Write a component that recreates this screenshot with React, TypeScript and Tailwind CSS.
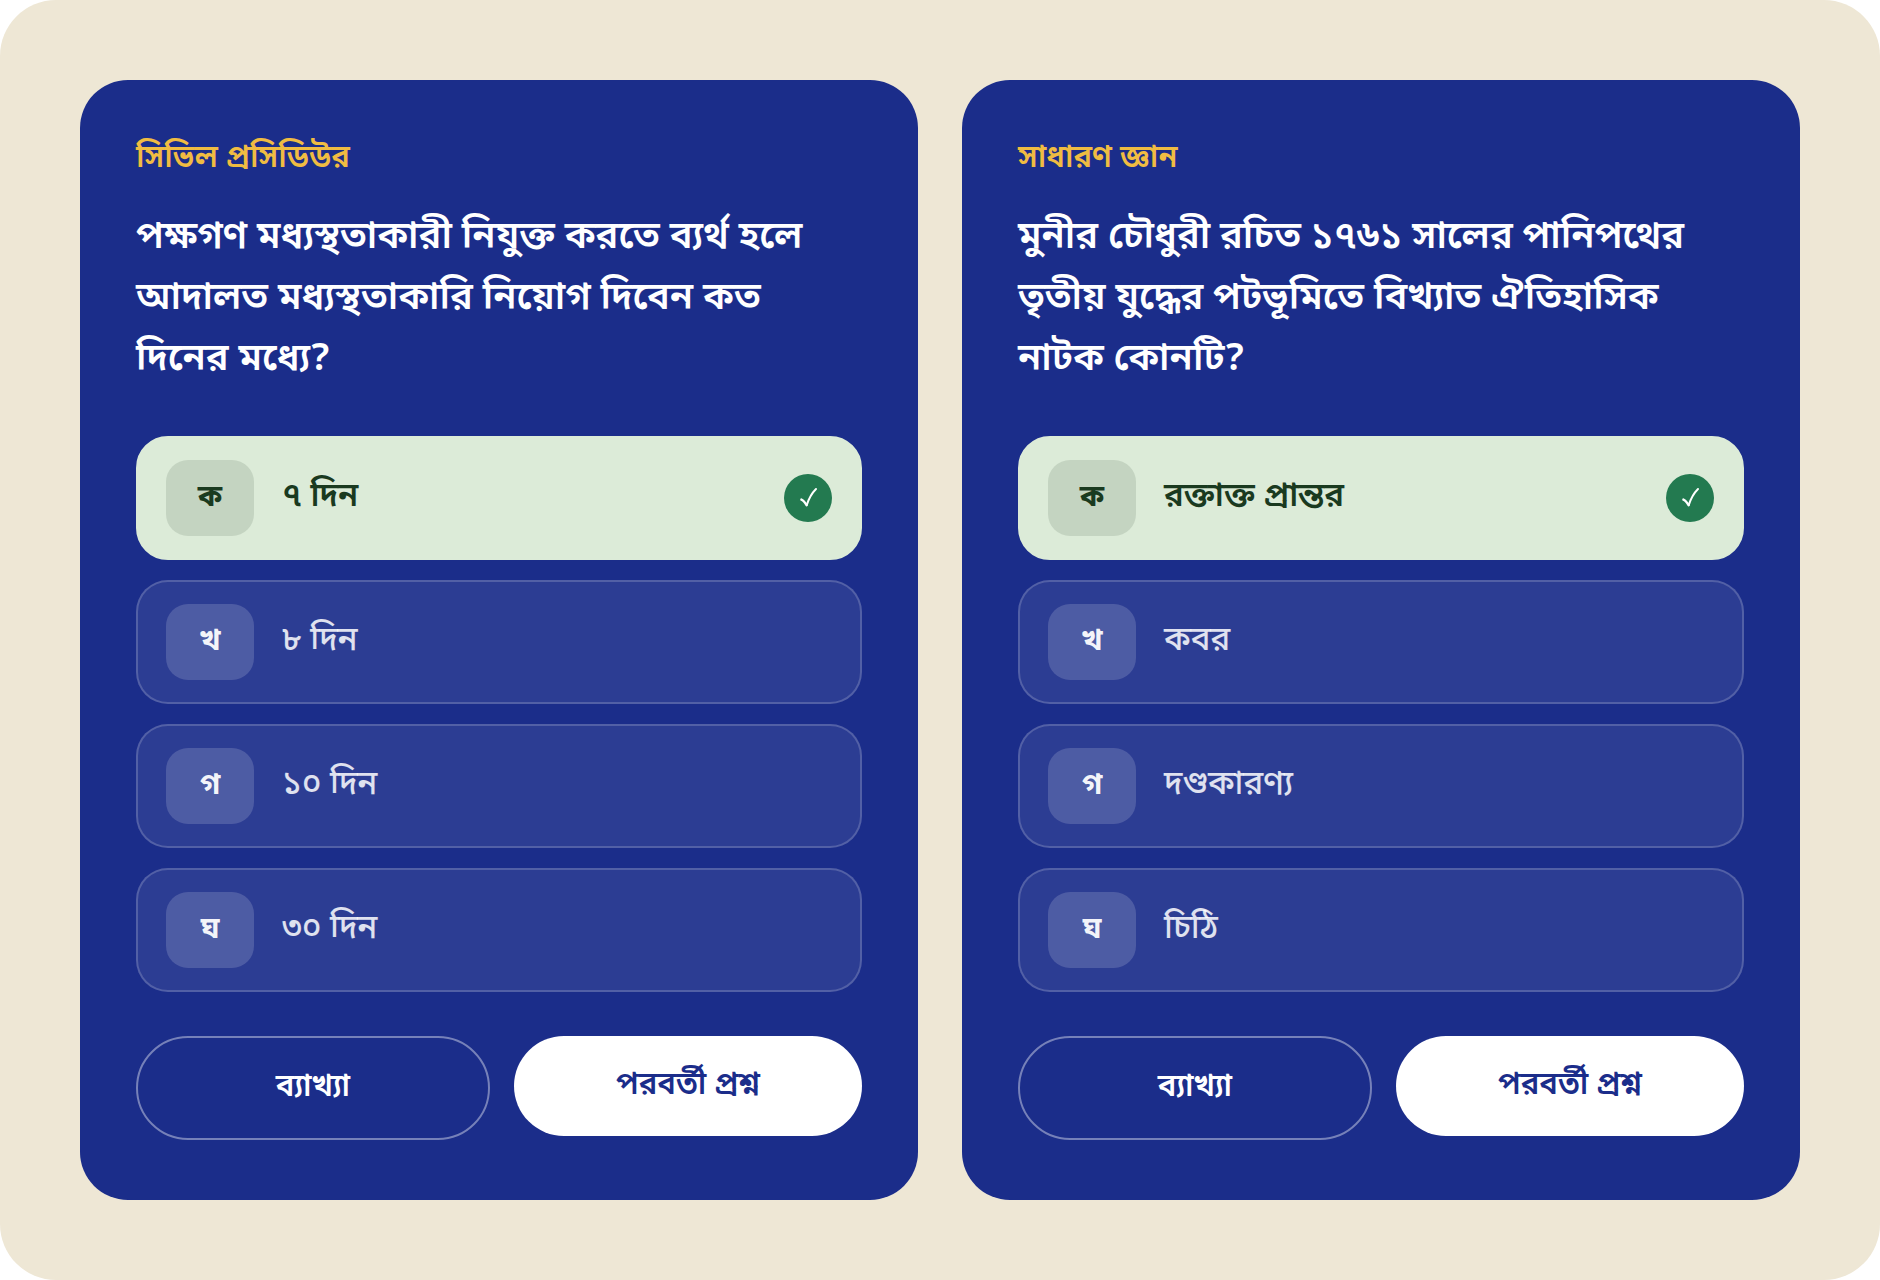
import { useState } from 'react';
import clsx from 'clsx';

interface Question {
  id: string;
  category: string;
  text: string;
  options: string[];
  answer: number;
}

const LETTERS = ['ক', 'খ', 'গ', 'ঘ'];

const questions: Question[] = [
  {
    id: 'civil',
    category: 'সিভিল প্রসিডিউর',
    text: 'পক্ষগণ মধ্যস্থতাকারী নিযুক্ত করতে ব্যর্থ হলে আদালত মধ্যস্থতাকারি নিয়োগ দিবেন কত দিনের মধ্যে?',
    options: ['৭ দিন', '৮ দিন', '১০ দিন', '৩০ দিন'],
    answer: 0,
  },
  {
    id: 'general',
    category: 'সাধারণ জ্ঞান',
    text: 'মুনীর চৌধুরী রচিত ১৭৬১ সালের পানিপথের তৃতীয় যুদ্ধের পটভূমিতে বিখ্যাত ঐতিহাসিক নাটক কোনটি?',
    options: ['রক্তাক্ত প্রান্তর', 'কবর', 'দণ্ডকারণ্য', 'চিঠি'],
    answer: 0,
  },
];

interface OptionProps {
  letter: string;
  label: string;
  correct: boolean;
  onSelect: () => void;
}

function CheckMark() {
  return (
    <svg viewBox="0 0 48 48" className="size-12" fill="none" stroke="currentColor" strokeLinecap="round" aria-hidden="true">
      <path d="M17.4 25.6C19.6 26.4 21 28.6 22.6 31.2" strokeWidth="2.4" />
      <path d="M22.8 31C24.8 24.6 27.6 19.4 32 15" strokeWidth="2" />
    </svg>
  );
}

function Option({ letter, label, correct, onSelect }: OptionProps) {
  return (
    <button
      type="button"
      onClick={onSelect}
      aria-pressed={correct}
      className={clsx(
        'flex w-full items-center gap-7 rounded-[32px] border-2 px-7 py-[22px] text-left',
        correct
          ? 'border-[#dcebd8] bg-[#dcebd8] text-[#1a3a1f]'
          : 'border-white/18 bg-white/8 text-white/85'
      )}
    >
      <span
        className={clsx(
          'flex h-[76px] w-[88px] shrink-0 items-center justify-center rounded-[22px] text-[30px] font-bold',
          correct ? 'bg-[#c4d4c1]' : 'bg-white/16 text-white/95'
        )}
      >
        {letter}
      </span>
      <span className={clsx('flex-1 text-[33px] leading-[48px]', correct ? 'font-semibold' : 'font-medium')}>
        {label}
      </span>
      {correct && (
        <span className="shrink-0 rounded-full bg-[#237a50] text-white">
          <CheckMark />
        </span>
      )}
    </button>
  );
}

function QuestionCard({ question }: { question: Question }) {
  const [selected, setSelected] = useState(question.answer);

  return (
    <section className="flex-1 rounded-[48px] bg-[#1b2d8a] p-14">
      <p className="mb-6 text-[31px] leading-[48px] font-semibold text-[#f0bc42]">{question.category}</p>
      <h2 className="mb-[45px] text-[38px] leading-[61px] font-semibold text-white">{question.text}</h2>

      <div className="flex flex-col gap-5">
        {question.options.map((label, index) => (
          <Option
            key={label}
            letter={LETTERS[index]}
            label={label}
            correct={index === selected}
            onSelect={() => setSelected(index)}
          />
        ))}
      </div>

      <div className="mt-11 flex items-start gap-6">
        <button
          type="button"
          className="flex-1 rounded-full border-2 border-white/40 px-[25px] pt-[29px] pb-[27px] text-[31px] leading-[44px] font-semibold text-white"
        >
          ব্যাখ্যা
        </button>
        <button
          type="button"
          className="flex-1 rounded-full bg-white px-6 pt-[29px] pb-[27px] text-[31px] leading-[44px] font-semibold text-[#1b2d8a]"
        >
          পরবর্তী প্রশ্ন
        </button>
      </div>
    </section>
  );
}

export default function App() {
  return (
    <main className="flex min-h-screen gap-11 rounded-[56px] bg-[#eee7d5] p-20 font-['Noto_Sans_Bengali','Noto_Sans',sans-serif]">
      {questions.map((question) => (
        <QuestionCard key={question.id} question={question} />
      ))}
    </main>
  );
}
